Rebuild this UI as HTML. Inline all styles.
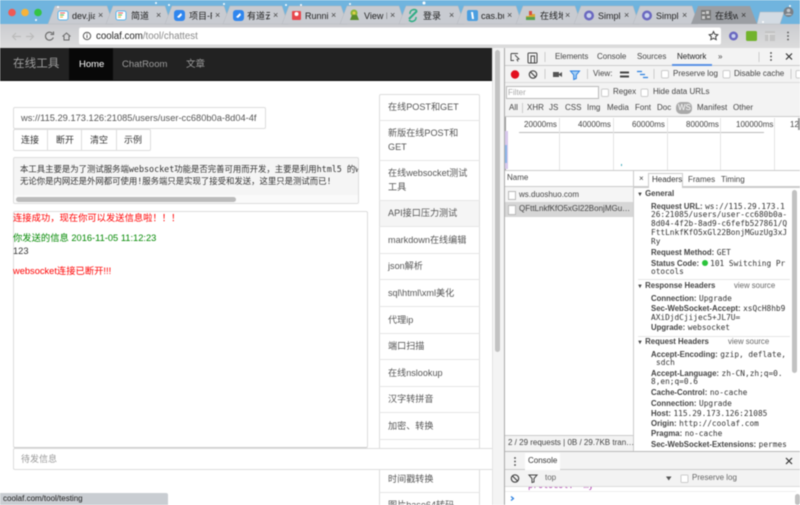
<!DOCTYPE html>
<html><head><meta charset="utf-8"><style>
html,body{margin:0;padding:0;width:800px;height:505px;overflow:hidden;background:#fff}
#r{position:absolute;left:0;top:0;width:800px;height:505px;overflow:hidden;filter:blur(.45px);font:9px "Liberation Sans","Noto Sans CJK SC",sans-serif;color:#333}
.t{position:absolute;white-space:nowrap;line-height:12px;height:12px}
.b{position:absolute;box-sizing:border-box}
.m{font-family:"DejaVu Sans Mono","Liberation Mono","Noto Sans CJK SC",monospace;font-size:8.4px;color:#333}
#dt .m{font-size:7.8px}
.k{font-weight:bold;color:#444;font-size:7.8px}
.d{font-size:8px;color:#444}
.s{font-size:9.1px;color:#555;left:388px}
.tb{font-size:9px;color:#222}
.v{font-size:7.8px;color:#666}
.tl{font-size:8px;color:#444}
svg{position:absolute;left:0;top:0}
</style></head><body><div id="r">
<div class="b" style="left:0;top:0;width:800px;height:25px;background:#70b4de"></div>
<div class="b" style="left:0;top:24px;width:800px;height:24px;background:linear-gradient(#cbccd0,#dcdcdc)"></div>
<svg width="800" height="48">
<g fill="#c8cbd1" stroke="#b5b8be" stroke-width=".5">
<path d="M48 24L55 6H107L113 24Z"/><path d="M106 24L113 6H165L171 24Z"/><path d="M165 24L172 6H224L230 24Z"/><path d="M223 24L230 6H282L288 24Z"/><path d="M282 24L289 6H341L347 24Z"/><path d="M340 24L347 6H399L405 24Z"/><path d="M399 24L406 6H458L464 24Z"/><path d="M457 24L464 6H516L522 24Z"/><path d="M516 24L523 6H575L581 24Z"/><path d="M574 24L581 6H633L639 24Z"/><path d="M633 24L640 6H692L698 24Z"/>
<path d="M757 24L760 12L784 12L780 24Z" fill="#d3dbe3"/>
</g>
<path d="M691 24L698 6H750L757 24Z" fill="#9b9ea3"/>
<g fill="#fff"><circle cx="58" cy="7" r="1"/><circle cx="156" cy="3" r="1"/><circle cx="169" cy="5" r="1"/><circle cx="224" cy="4" r="1"/><circle cx="286" cy="5" r="1"/><circle cx="301" cy="5" r="1"/><circle cx="350" cy="4" r="1"/><circle cx="424" cy="3" r="1.5"/><circle cx="790" cy="6" r="1"/><circle cx="763" cy="22" r="1"/><circle cx="36" cy="20" r="1"/></g>
<circle cx="12" cy="12.500" r="3.800" fill="#ef5a55"/><circle cx="25" cy="12.500" r="3.800" fill="#f6b33a"/><circle cx="38" cy="12.500" r="3.800" fill="#34c445"/>
<g>
<rect x="58" y="11" width="10" height="9" rx="2" fill="#fff" stroke="#5ab2e8"/><path d="M60 13h5" stroke="#e55" /><path d="M60 15h4" stroke="#4b5"/><path d="M60 17h3" stroke="#ea3"/>
<rect x="116" y="11" width="10" height="9" rx="2" fill="#fff" stroke="#5ab2e8"/><path d="M118 13h5" stroke="#e55"/><path d="M118 15h4" stroke="#4b5"/><path d="M118 17h3" stroke="#ea3"/>
<rect x="174" y="10" width="11" height="11" rx="3" fill="#2f86ee"/><path d="M177 17l4-4 1 2-3 3z" fill="#fff"/>
<rect x="233" y="10" width="11" height="11" rx="3" fill="#2f86ee"/><path d="M236 17l4-4 1 2-3 3z" fill="#fff"/>
<rect x="292" y="11" width="9" height="9" rx="1" fill="#e8474c"/><circle cx="296.500" cy="14" r="2" fill="#fff"/>
<circle cx="354" cy="13" r="3.500" fill="#8ab537"/><path d="M350 20h9l-2-5h-5z" fill="#5a8c2c"/><circle cx="354" cy="13" r="1.500" fill="#e4d24c"/>
<path d="M409 19l8-8" stroke="#2fae85" stroke-width="2"/><path d="M410 14a4 4 0 017-3M416 17a4 4 0 01-7 3" stroke="#2fae85" stroke-width="1.500" fill="none"/>
<rect x="467" y="10" width="11" height="11" rx="2" fill="#4a9ee0"/><path d="M471 12h2l1 7h-2z" fill="#fff"/>
<path d="M526 20v-4h3v4zM529 20v-8h3v8zM532 20v-6h3v6z" fill="#d9a732"/><rect x="529" y="11" width="3" height="4" fill="#d8503f"/><rect x="526" y="17" width="9" height="3" fill="#5aa04c"/>
<circle cx="589" cy="15.500" r="5" fill="#6a68c0"/><circle cx="589" cy="15.500" r="2.500" fill="#c9d3ee"/>
<circle cx="647" cy="15.500" r="5" fill="#6a68c0"/><circle cx="647" cy="15.500" r="2.500" fill="#c9d3ee"/>
<rect x="701" y="10" width="10" height="10" fill="#777"/><path d="M702 12h3v2h-3zM706 11h3v3h-3zM702 16h3v3h-3zM707 16h3v2h-3z" fill="#ccc"/>
</g>
<circle cx="788.500" cy="12" r="5" fill="#7a8087"/><circle cx="788.500" cy="10.500" r="1.800" fill="#c4c8cc"/><path d="M785 15a4 3 0 017 0z" fill="#c4c8cc"/>
<g stroke="#bbb" stroke-width="1.200" fill="none"><path d="M13 36.500h8M16 33l-3.500 3.500L16 40"/><path d="M26 36.500h8M30 33l3.500 3.500L30 40"/></g>
<path d="M52.500 33.500a4 4 0 10.800 4M53.500 31.500v3h-3" stroke="#666" stroke-width="1.100" fill="none"/>
<path d="M62.500 36.500l4-3.500 4 3.500M64 36v4h5v-4" stroke="#666" stroke-width="1" fill="none"/>
<rect x="79" y="27.500" width="642" height="17" rx="2" fill="#fff"/>
<circle cx="87" cy="36" r="3.700" fill="none" stroke="#444" stroke-width=".9"/><path d="M87 35v3M87 33.500v.8" stroke="#444" stroke-width=".9"/>
<path d="M713.500 31.500l1.300 2.800 3 .4-2.200 2 .6 3-2.700-1.500-2.700 1.500.6-3-2.200-2 3-.4z" fill="none" stroke="#444"/>
<circle cx="733.500" cy="36" r="4.500" fill="#6a68c0"/><circle cx="733.500" cy="36" r="2" fill="#c9d3ee"/>
<rect x="746" y="31" width="11" height="10" rx="1.500" fill="#72b32c"/>
<rect x="765" y="31" width="10" height="10" fill="#c4c4c4"/><path d="M765 34h10M769 34v7" stroke="#e4e4e4"/>
<g fill="#555"><circle cx="788" cy="32.500" r=".9"/><circle cx="788" cy="36" r=".9"/><circle cx="788" cy="39.500" r=".9"/></g>
</svg>
<div class="t tb" style="left:72px;top:9.500px;width:23px;overflow:hidden">dev.jia</div><div class="t tb" style="left:131px;top:9.500px">简道</div>
<div class="t tb" style="left:189px;top:9.500px;width:23px;overflow:hidden">项目-R</div><div class="t tb" style="left:247px;top:9.500px;width:23px;overflow:hidden">有道云</div>
<div class="t tb" style="left:305px;top:9.500px;width:23px;overflow:hidden">Runnir</div><div class="t tb" style="left:364px;top:9.500px;width:23px;overflow:hidden">View I</div>
<div class="t tb" style="left:423px;top:9.500px">登录</div><div class="t tb" style="left:481px;top:9.500px;width:23px;overflow:hidden">cas.bu</div>
<div class="t tb" style="left:540px;top:9.500px;width:23px;overflow:hidden">在线地</div><div class="t tb" style="left:598px;top:9.500px;width:23px;overflow:hidden">Simple</div>
<div class="t tb" style="left:656px;top:9.500px;width:23px;overflow:hidden">Simple</div><div class="t tb" style="left:715px;top:9.500px;width:23px;overflow:hidden">在线w</div>
<div class="t" style="left:98px;top:9px;color:#444">×</div><div class="t" style="left:156px;top:9px;color:#444">×</div><div class="t" style="left:215px;top:9px;color:#444">×</div><div class="t" style="left:273px;top:9px;color:#444">×</div><div class="t" style="left:331px;top:9px;color:#444">×</div><div class="t" style="left:390px;top:9px;color:#444">×</div><div class="t" style="left:449px;top:9px;color:#444">×</div><div class="t" style="left:507px;top:9px;color:#444">×</div><div class="t" style="left:565px;top:9px;color:#444">×</div><div class="t" style="left:624px;top:9px;color:#444">×</div><div class="t" style="left:682px;top:9px;color:#444">×</div><div class="t" style="left:741px;top:9px;color:#333">×</div>
<div class="t" style="left:96px;top:30.500px;font-size:9.700px;color:#222">coolaf.com<span style="color:#888">/tool/chattest</span></div>

<div class="b" style="left:0;top:48px;width:492px;height:33px;background:#222;border-bottom:1px solid #111"></div>
<div class="b" style="left:69px;top:48px;width:44px;height:32px;background:#080808"></div>
<div class="t" style="left:13px;top:58px;font-size:11.600px;color:#9d9d9d">在线工具</div>
<div class="t" style="left:79px;top:59px;font-size:9.500px;color:#fff">Home</div>
<div class="t" style="left:122px;top:59px;font-size:9.500px;color:#9d9d9d">ChatRoom</div>
<div class="t" style="left:186px;top:59px;font-size:9.500px;color:#9d9d9d">文章</div>

<div class="b" style="left:13px;top:107px;width:253px;height:22px;border:1px solid #ddd;border-radius:2px"></div>
<div class="t" style="left:21px;top:112px;font-size:9.300px;color:#555;width:236px;overflow:hidden">ws://115.29.173.126:21085/users/user-cc680b0a-8d04-4f2b</div>
<div class="b" style="left:13px;top:129px;width:138px;height:22px;border:1px solid #ddd;border-radius:2px"></div>
<div class="b" style="left:47px;top:129px;width:1px;height:22px;background:#ddd"></div><div class="b" style="left:81px;top:129px;width:1px;height:22px;background:#ddd"></div><div class="b" style="left:116px;top:129px;width:1px;height:22px;background:#ddd"></div>
<div class="t" style="left:21px;top:134px;font-size:9px">连接</div><div class="t" style="left:56px;top:134px;font-size:9px">断开</div><div class="t" style="left:90px;top:134px;font-size:9px">清空</div><div class="t" style="left:124px;top:134px;font-size:9px">示例</div>
<div class="b" style="left:13px;top:157px;width:346px;height:47px;border:1px solid #ddd;border-radius:2px;background:#f5f5f5;overflow:hidden">
<div class="b" style="left:0;top:37px;width:346px;height:9px;background:#fafafa"></div><div class="b" style="left:2px;top:39px;width:220px;height:5px;border-radius:3px;background:#bbb"></div>
<div class="t m" style="left:6px;top:5px">本工具主要是为了测试服务端websocket功能是否完善可用而开发，主要是利用html5 的websocket</div>
<div class="t m" style="left:6px;top:17px">无论你是内网还是外网都可使用!服务端只是实现了接受和发送，这里只是测试而已!</div></div>

<div class="b" style="left:12.500px;top:210.500px;width:355.500px;height:237px;border:1px solid #ddd;border-bottom-color:#ccc;border-radius:2px"></div>
<div class="t" style="left:13px;top:212px;font-size:9.300px;color:#f00">连接成功，现在你可以发送信息啦！！！</div>
<div class="t" style="left:13px;top:232px;font-size:9.300px;color:#080">你发送的信息 2016-11-05 11:12:23</div>
<div class="t" style="left:13px;top:245px;font-size:9.300px">123</div>
<div class="t" style="left:13px;top:265px;font-size:9.300px;color:#f00">websocket连接已断开!!!</div>

<div class="b" style="left:379px;top:94px;width:101px;height:420px;border:1px solid #ddd;border-radius:2px"></div>
<div class="b" style="left:380px;top:200px;width:99px;height:26px;background:#f5f5f5"></div>
<div class="b" style="left:379px;top:120px;width:101px;height:1px;background:#e5e5e5"></div><div class="b" style="left:379px;top:160px;width:101px;height:1px;background:#e5e5e5"></div><div class="b" style="left:379px;top:200px;width:101px;height:1px;background:#e5e5e5"></div><div class="b" style="left:379px;top:226px;width:101px;height:1px;background:#e5e5e5"></div><div class="b" style="left:379px;top:253px;width:101px;height:1px;background:#e5e5e5"></div><div class="b" style="left:379px;top:279px;width:101px;height:1px;background:#e5e5e5"></div><div class="b" style="left:379px;top:306px;width:101px;height:1px;background:#e5e5e5"></div><div class="b" style="left:379px;top:333px;width:101px;height:1px;background:#e5e5e5"></div><div class="b" style="left:379px;top:359px;width:101px;height:1px;background:#e5e5e5"></div><div class="b" style="left:379px;top:386px;width:101px;height:1px;background:#e5e5e5"></div><div class="b" style="left:379px;top:412px;width:101px;height:1px;background:#e5e5e5"></div><div class="b" style="left:379px;top:439px;width:101px;height:1px;background:#e5e5e5"></div><div class="b" style="left:379px;top:492px;width:101px;height:1px;background:#e5e5e5"></div>
<div class="t s" style="top:101px">在线POST和GET</div><div class="t s" style="top:127px">新版在线POST和</div><div class="t s" style="top:141px">GET</div><div class="t s" style="top:167px">在线websocket测试</div><div class="t s" style="top:181px">工具</div><div class="t s" style="top:207px">API接口压力测试</div><div class="t s" style="top:234px">markdown在线编辑</div><div class="t s" style="top:260px">json解析</div><div class="t s" style="top:287px">sql\html\xml美化</div><div class="t s" style="top:314px">代理ip</div><div class="t s" style="top:340px">端口扫描</div><div class="t s" style="top:367px">在线nslookup</div><div class="t s" style="top:393px">汉字转拼音</div><div class="t s" style="top:420px">加密、转换</div><div class="t s" style="top:473px">时间戳转换</div><div class="t s" style="top:499px">图片base64转码</div>

<div class="b" style="left:13px;top:448px;width:480px;height:22px;background:#fff;border:1px solid #ddd;border-right:0;border-radius:2px 0 0 2px"></div>
<div class="t" style="left:21px;top:453px;font-size:9px;color:#999">待发信息</div>
<div class="b" style="left:0;top:493px;width:168px;height:12px;background:#c9cdd2;border-radius:0 2px 0 0"></div>
<div class="t" style="left:3px;top:493px;font-size:8px;color:#222">coolaf.com/tool/testing</div>

<div class="b" style="left:492px;top:48px;width:12px;height:457px;background:#f4f4f4;border-left:1px solid #e4e4e4"></div>
<div class="b" style="left:495px;top:50px;width:5px;height:302px;border-radius:3px;background:#c2c2c2"></div>

<div class="b" style="left:504px;top:48px;width:296px;height:457px;background:#fff;border-left:1px solid #aaa;overflow:hidden"></div>
<div class="b" style="left:505px;top:48px;width:295px;height:18px;background:#f3f3f3;border-bottom:1px solid #ccc"></div>
<div class="b" style="left:505px;top:66px;width:295px;height:17px;background:#f3f3f3;border-bottom:1px solid #ddd"></div>
<div class="b" style="left:505px;top:83px;width:295px;height:34px;background:#f3f3f3;border-bottom:1px solid #ccc"></div>
<div class="b" style="left:515px;top:64px;width:31px;height:2px;background:#5a92e6;left:672px;width:40px"></div>
<div class="t d" style="left:555px;top:51px">Elements</div><div class="t d" style="left:597px;top:51px">Console</div><div class="t d" style="left:637px;top:51px">Sources</div><div class="t d" style="left:677px;top:51px;color:#222">Network</div><div class="t d" style="left:718px;top:51px">»</div>
<div class="t d" style="left:593px;top:68px">View:</div><div class="t d" style="left:673px;top:68px">Preserve log</div><div class="t d" style="left:734px;top:68px">Disable cache</div>
<div class="b" style="left:506px;top:86px;width:93px;height:13px;background:#fff;border:1px solid #bbb"></div>
<div class="t d" style="left:508px;top:87px;color:#aaa">Filter</div>
<div class="t d" style="left:613px;top:86px">Regex</div><div class="t d" style="left:653px;top:86px">Hide data URLs</div>
<div class="t d" style="left:509px;top:102px">All</div><div class="t d" style="left:527px;top:102px">XHR</div><div class="t d" style="left:549px;top:102px">JS</div><div class="t d" style="left:565px;top:102px">CSS</div><div class="t d" style="left:587px;top:102px">Img</div><div class="t d" style="left:607px;top:102px">Media</div><div class="t d" style="left:635px;top:102px">Font</div><div class="t d" style="left:657px;top:102px">Doc</div>
<div class="b" style="left:676px;top:102px;width:16px;height:12px;border-radius:5px;background:#a9a9a9"></div><div class="t d" style="left:678px;top:102px;color:#fff">WS</div>
<div class="t d" style="left:697px;top:102px">Manifest</div><div class="t d" style="left:733px;top:102px">Other</div>
<svg width="800" height="120">
<g fill="none" stroke="#444" stroke-width="1"><path d="M511 53.500h7M511 53.500v7h3M515 55l4 4-2 .5 1 2" stroke-width=".9"/><rect x="528" y="53" width="9" height="10" rx="1"/><rect x="531" y="56" width="3.500" height="7" fill="#f3f3f3"/></g>
<path d="M545 52v10M759 52v10" stroke="#ccc"/>
<g fill="#444"><circle cx="771" cy="53" r=".9"/><circle cx="771" cy="56.500" r=".9"/><circle cx="771" cy="60" r=".9"/></g>
<path d="M786 53.500l6 6M792 53.500l-6 6" stroke="#333" stroke-width="1.200"/>
<circle cx="515" cy="74.500" r="4.200" fill="#e3101f"/>
<circle cx="533" cy="74.500" r="3.700" fill="none" stroke="#444" stroke-width="1.200"/><path d="M530.500 72l5 5" stroke="#444" stroke-width="1.200"/>
<path d="M553 72h6v5h-6zM559 74l3-2v5l-3-2z" fill="#555"/>
<path d="M570.500 71h9l-3.200 4v3.500l-2.600 1V75z" fill="#a5d0f5" stroke="#2a7fe0" stroke-width="1"/>
<path d="M545 69v10M587.500 69v10M654 69v10M791 69v10M522.500 103v10" stroke="#ccc"/>
<path d="M620 71.500h9v2h-9zM620 75.500h9v2h-9z" fill="#444"/>
<path d="M637 71.500h5M640 74.500h5M643 77.500h5" stroke="#2a7fe0" stroke-width="1.200"/>
<g fill="#fff" stroke="#ccc"><rect x="661.500" y="70.500" width="7" height="7.500" rx="1.500"/><rect x="723" y="70.500" width="7" height="7.500" rx="1.500"/><rect x="796" y="70.500" width="7" height="7.500" rx="1.500"/><rect x="601.500" y="89" width="7" height="7.500" rx="1.500"/><rect x="641" y="89" width="7" height="7.500" rx="1.500"/></g>
</svg>
<div class="t tl" style="left:524px;top:119px">20000ms</div><div class="t tl" style="left:578px;top:119px">40000ms</div><div class="t tl" style="left:632px;top:119px">60000ms</div><div class="t tl" style="left:686px;top:119px">80000ms</div><div class="t tl" style="left:736px;top:119px">100000ms</div><div class="t tl" style="left:790px;top:119px">12</div>
<div class="b" style="left:505px;top:117px;width:1px;height:53px;background:#999"></div>
<div class="b" style="left:505px;top:131px;width:3px;height:38px;background:#d8c8ec"></div>
<div class="b" style="left:505px;top:145px;width:2px;height:18px;background:#8ab4e8"></div>
<div class="b" style="left:519px;top:131.500px;width:245px;height:1px;background:#bbb"></div>
<div class="b" style="left:559px;top:118px;width:1px;height:52px;background:#e4e4e4"></div><div class="b" style="left:613px;top:118px;width:1px;height:52px;background:#e4e4e4"></div><div class="b" style="left:667px;top:118px;width:1px;height:52px;background:#e4e4e4"></div><div class="b" style="left:720px;top:118px;width:1px;height:52px;background:#e4e4e4"></div><div class="b" style="left:774px;top:118px;width:1px;height:52px;background:#e4e4e4"></div>
<div class="b" style="left:621px;top:164px;width:1px;height:2px;background:#4ab"></div>
<div class="b" style="left:798px;top:118px;width:2px;height:12px;background:#999"></div>

<div class="b" style="left:505px;top:170px;width:295px;height:1px;background:#ccc"></div>
<div class="b" style="left:505px;top:171px;width:295px;height:16px;background:#fff;border-bottom:1px solid #ccc"></div>
<div class="b" style="left:633px;top:171px;width:1px;height:280px;background:#ccc"></div>
<div class="b" style="left:505px;top:187px;width:128px;height:15px;background:#f5f5f5"></div>
<div class="b" style="left:505px;top:202px;width:128px;height:15px;background:#d6d6d6"></div>
<div class="b" style="left:508px;top:191px;width:8px;height:9px;background:#fff;border:1px solid #bbb"></div>
<div class="b" style="left:508px;top:205px;width:8px;height:10px;background:#fff;border:1px solid #bbb"></div>
<div class="t d" style="left:507px;top:172px">Name</div>
<div class="t d" style="left:519px;top:188.500px">ws.duoshuo.com</div>
<div class="t d" style="left:519px;top:203px">QFttLnkfKfO5xGl22BonjMGu…</div>
<div class="b" style="left:505px;top:435px;width:128px;height:16px;background:#f3f3f3;border-top:1px solid #ccc"></div>
<div class="t d" style="left:508px;top:437px">2 / 29 requests | 0B / 29.7KB tran…</div>

<div class="t d" style="left:639px;top:173px">×</div>
<div class="b" style="left:648px;top:173px;width:35px;height:15px;background:#fff;border:1px solid #ccc;border-bottom:0;z-index:2"></div>
<div class="t d" style="left:652px;top:174px;color:#333;z-index:3">Headers</div><div class="t d" style="left:688px;top:174px">Frames</div><div class="t d" style="left:721px;top:174px">Timing</div>
<div class="b" style="left:634px;top:187px;width:166px;height:1px;background:#ccc"></div>
<div class="b" style="left:638px;top:279px;width:152px;height:1px;background:#e6e6e6"></div><div class="b" style="left:638px;top:336px;width:152px;height:1px;background:#e6e6e6"></div>
<div class="b" style="left:792px;top:190px;width:5px;height:183px;border-radius:3px;background:#c2c2c2"></div>
<div id="dt" style="position:absolute;left:634px;top:188px;width:156px;height:263px;overflow:hidden">
<div class="t k" style="left:3px;top:0"><span style="font-size:6px">▼</span> General</div>
<div class="t" style="left:17px;top:12px"><span class="k">Request URL:</span> <span class="m">ws://115.29.173.1</span></div>
<div class="t m" style="left:17px;top:21px">26:21085/users/user-cc680b0a-</div>
<div class="t m" style="left:17px;top:30px">8d04-4f2b-8ad9-c6fefb527861/Q</div>
<div class="t m" style="left:17px;top:39px">FttLnkfKfO5xGl22BonjMGuzUg3xJ</div>
<div class="t m" style="left:17px;top:48px">Ry</div>
<div class="t" style="left:17px;top:58px"><span class="k">Request Method:</span> <span class="m">GET</span></div>
<div class="t" style="left:17px;top:69px"><span class="k">Status Code:</span> <span style="display:inline-block;width:6px;height:6px;border-radius:50%;background:#2bc43c"></span> <span class="m">101 Switching Pr</span></div>
<div class="t m" style="left:17px;top:78px">otocols</div>
<div class="t k" style="left:3px;top:92px"><span style="font-size:6px">▼</span> Response Headers</div><div class="t v" style="left:100px;top:92px">view source</div>
<div class="t" style="left:17px;top:104px"><span class="k">Connection:</span> <span class="m">Upgrade</span></div>
<div class="t" style="left:17px;top:114px"><span class="k">Sec-WebSocket-Accept:</span> <span class="m">xsQcH8hb9</span></div>
<div class="t m" style="left:17px;top:124px">AXiDjdCjijec5+JL7U=</div>
<div class="t" style="left:17px;top:133px"><span class="k">Upgrade:</span> <span class="m">websocket</span></div>
<div class="t k" style="left:3px;top:148px"><span style="font-size:6px">▼</span> Request Headers</div><div class="t v" style="left:94px;top:148px">view source</div>
<div class="t" style="left:17px;top:160px"><span class="k">Accept-Encoding:</span> <span class="m">gzip, deflate,</span></div>
<div class="t m" style="left:22px;top:169px">sdch</div>
<div class="t" style="left:17px;top:179px"><span class="k">Accept-Language:</span> <span class="m">zh-CN,zh;q=0.</span></div>
<div class="t m" style="left:17px;top:188px">8,en;q=0.6</div>
<div class="t" style="left:17px;top:198px"><span class="k">Cache-Control:</span> <span class="m">no-cache</span></div>
<div class="t" style="left:17px;top:209px"><span class="k">Connection:</span> <span class="m">Upgrade</span></div>
<div class="t" style="left:17px;top:219px"><span class="k">Host:</span> <span class="m">115.29.173.126:21085</span></div>
<div class="t" style="left:17px;top:229px"><span class="k">Origin:</span> <span class="m">http://coolaf.com</span></div>
<div class="t" style="left:17px;top:239px"><span class="k">Pragma:</span> <span class="m">no-cache</span></div>
<div class="t" style="left:17px;top:250px"><span class="k">Sec-WebSocket-Extensions:</span> <span class="m">permes</span></div>
</div>

<div class="b" style="left:505px;top:451px;width:295px;height:54px;background:#fff;border-top:1px solid #bbb"></div>
<div class="b" style="left:505px;top:452px;width:295px;height:18px;background:#f3f3f3;border-bottom:1px solid #ccc"></div>
<div class="b" style="left:505px;top:470px;width:295px;height:17px;background:#f3f3f3;border-bottom:1px solid #ddd"></div>
<div class="b" style="left:525px;top:453px;width:35px;height:17px;background:#fff"></div>
<div class="t d" style="left:528px;top:455px;color:#333">Console</div>
<div class="t d" style="left:545px;top:472px;color:#666">top</div>
<div class="t d" style="left:692px;top:472px;color:#666">Preserve log</div>
<div class="b" style="left:528px;top:487px;width:64px;height:3px;overflow:hidden"><div class="t m" style="left:0;top:-8px;color:#a3a">protocol: "my"</div></div>
<div class="b" style="left:505px;top:491px;width:291px;height:1px;background:#eee"></div>
<div class="b" style="left:795px;top:494px;width:5px;height:11px;border-radius:3px;background:#c2c2c2"></div>
<svg width="800" height="505" style="pointer-events:none">
<g fill="#444"><circle cx="515" cy="458" r=".9"/><circle cx="515" cy="461.500" r=".9"/><circle cx="515" cy="465" r=".9"/></g>
<path d="M786 458l6 6M792 458l-6 6" stroke="#333" stroke-width="1.200"/>
<circle cx="515" cy="478.500" r="3.700" fill="none" stroke="#444" stroke-width="1.200"/><path d="M512.500 476l5 5" stroke="#444" stroke-width="1.200"/>
<path d="M529 475h8l-3 3.500v3.500l-2 .5v-4z" fill="none" stroke="#444"/>
<path d="M666 476.500h5.500l-2.750 4z" fill="#555"/>
<rect x="681" y="475" width="7" height="7.500" rx="1" fill="#fff" stroke="#ccc"/>
<path d="M511 496.500l2.500 2-2.500 2" fill="none" stroke="#2a7fe0" stroke-width="1.200"/>
</svg>
</div></body></html>
